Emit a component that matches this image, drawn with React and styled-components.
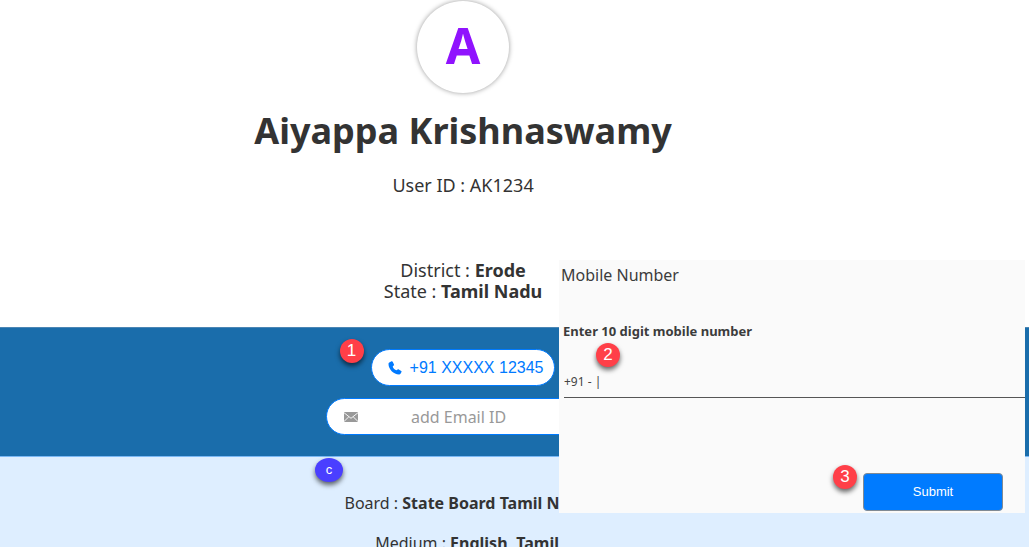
import React from "react";
import styled, { createGlobalStyle } from "styled-components";

const GlobalStyle = createGlobalStyle`
  * { box-sizing: border-box; }
  body {
    margin: 0;
    background: #fff;
    color: #333;
    font-family: "Noto Sans", "Open Sans", sans-serif;
  }
`;

const Page = styled.main`
  position: relative;
  display: flex;
  flex-direction: column;
  height: 100vh;
  overflow: hidden;
`;

const Column = styled.div`
  display: flex;
  flex-direction: column;
  align-items: center;
  width: 90%;
`;

const Header = styled.header`
  flex: none;
  padding: 1px 0 25px;
`;

const Avatar = styled.div`
  display: flex;
  align-items: center;
  justify-content: center;
  width: 92px;
  height: 92px;
  border-radius: 50%;
  background: #fff;
  box-shadow: 0 0 5px rgba(0, 0, 0, 0.4);
  color: #9013fe;
  font-size: 50px;
  font-weight: 700;
  line-height: 88px;
  padding-bottom: 4px;
`;

const Name = styled.h1`
  margin: 12px 0 18px;
  font-size: 36px;
  line-height: 52px;
  font-weight: 700;
`;

const Text = styled.p`
  margin: 0;
  font-size: ${(p) => (p.$small ? 16 : 18)}px;
  line-height: 21px;
  white-space: nowrap;
`;

const Location = styled.div`
  margin-top: 64px;
  text-align: center;
`;

const Contact = styled.section`
  flex: none;
  padding: 21px 0;
  border-top: 1px solid #4b86b4;
  border-bottom: 1px solid #7ab8f5;
  background: #1a6dab;
`;

const Contacts = styled(Column)`
  gap: 12px;
`;

const Anchor = styled.div`
  position: relative;
`;

const PhoneButton = styled.button`
  display: flex;
  align-items: center;
  gap: 8px;
  height: 37px;
  padding: 0 11px 0 16px;
  border: 1px solid #007aff;
  border-radius: 19px;
  background: #fff;
  color: #007aff;
  font: 16px/20px "Liberation Sans", Arial, sans-serif;
  white-space: nowrap;
`;

const EmailField = styled.label`
  display: flex;
  align-items: center;
  width: 274px;
  height: 37px;
  padding: 0 40px 0 17px;
  border: 1px solid #007aff;
  border-radius: 19px;
  background: #fff;
`;

const EmailInput = styled.input`
  flex: 1;
  min-width: 0;
  padding: 0;
  border: 0;
  outline: 0;
  background: transparent;
  font: 16px/22px "Noto Sans", sans-serif;
  text-align: center;
  &::placeholder { color: #999; opacity: 1; }
`;

const Details = styled.section`
  position: relative;
  flex: 1;
  padding-top: 36px;
  background: #deeeff;
`;

const DetailRows = styled(Column)`
  gap: 19px;
  padding-left: 8px;
`;

const Dialog = styled.form`
  position: absolute;
  top: 260px;
  right: 4px;
  display: flex;
  flex-direction: column;
  width: 466px;
  height: 253px;
  padding-bottom: 2px;
  background: #fafafa;
  color: #3c3c3c;
`;

const DialogTitle = styled.h2`
  margin: 3px 0 0 2px;
  font-size: 16px;
  line-height: 24px;
  font-weight: 400;
`;

const Label = styled.label`
  margin: 34px 0 0 4px;
  font-size: 13px;
  line-height: 20px;
  font-weight: 700;
`;

const NumberRow = styled.div`
  position: relative;
  margin: 30px 0 0 5px;
  border-bottom: 1px solid #555;
`;

const NumberInput = styled.input`
  display: block;
  width: 100%;
  height: 26px;
  padding: 0 0 6px;
  border: 0;
  outline: 0;
  background: transparent;
  color: #444;
  font: 12px/20px "Noto Sans", sans-serif;
`;

const SubmitRow = styled.div`
  position: relative;
  align-self: flex-end;
  margin: auto 22px 0 0;
`;

const SubmitButton = styled.button`
  width: 140px;
  height: 38px;
  border: 1px solid #808a94;
  border-radius: 4px;
  background: #007bff;
  color: #fff;
  font: 13px/20px "Liberation Sans", Arial, sans-serif;
`;

const Badge = styled.span`
  position: absolute;
  top: ${(p) => p.$top}px;
  left: ${(p) => p.$left};
  display: flex;
  align-items: center;
  justify-content: center;
  width: ${(p) => (p.$violet ? 28 : 24)}px;
  height: 24px;
  border-radius: 50%;
  background: ${(p) => (p.$violet ? "#4a3fff" : "#ff3f48")};
  box-shadow: 0 3px 5px rgba(0, 0, 0, 0.6);
  color: #fff;
  font-family: "Liberation Sans", Arial, sans-serif;
  font-size: ${(p) => (p.$violet ? 13 : 17)}px;
  line-height: 24px;
`;

const PhoneIcon = () => (
  <svg width="14" height="14" viewBox="0 0 14 14" aria-hidden="true">
    <path
      fill="#007aff"
      d="M1.300 1.500 3.500.300C4 .100 4.400.300 4.700.800L6 3.400C6.200 3.900 6.100 4.300 5.700 4.600L4.800 5.300C4.600 6.600 6.800 9 8.700 9.300L9.600 8.500C10 8.200 10.400 8.200 10.800 8.400L13.200 9.900C13.700 10.200 13.800 10.600 13.500 11.100L12.500 12.700C12.200 13.200 11.700 13.400 11.100 13.400 5.500 13.400.500 8.300.500 3 .500 2.300.700 1.800 1.300 1.500Z"
    />
  </svg>
);

const MailIcon = () => (
  <svg width="14" height="10" viewBox="0 0 14 10" aria-hidden="true">
    <rect width="14" height="10" fill="#999" />
    <path
      d="M0 .7 7 6.300 14 .7M0 9.500 4.900 4.700M14 9.500 9.100 4.700"
      fill="none"
      stroke="#fff"
      strokeWidth=".9"
    />
  </svg>
);

export default function App() {
  return (
    <Page>
      <GlobalStyle />
      <Header>
        <Column>
          <Avatar>A</Avatar>
          <Name>Aiyappa Krishnaswamy</Name>
          <Text>User ID : AK1234</Text>
          <Location>
            <Text>District : <b>Erode</b></Text>
            <Text>State : <b>Tamil Nadu</b></Text>
          </Location>
        </Column>
      </Header>

      <Contact>
        <Contacts>
          <Anchor>
            <PhoneButton type="button">
              <PhoneIcon />
              +91 XXXXX 12345
            </PhoneButton>
            <Badge $top={-10} $left="-31px">1</Badge>
          </Anchor>
          <EmailField>
            <MailIcon />
            <EmailInput type="email" placeholder="add Email ID" aria-label="Email ID" />
          </EmailField>
        </Contacts>
      </Contact>

      <Details>
        <DetailRows>
          <Text $small>Board : <b>State Board Tamil Nadu</b></Text>
          <Text $small>Medium : <b>English, Tamil</b></Text>
        </DetailRows>
        <Badge $violet $top={1} $left="calc(45% - 148px)">c</Badge>
      </Details>

      <Dialog onSubmit={(e) => e.preventDefault()}>
        <DialogTitle>Mobile Number</DialogTitle>
        <Label htmlFor="mobile">Enter 10 digit mobile number</Label>
        <NumberRow>
          <NumberInput id="mobile" type="tel" defaultValue="+91 - |" />
          <Badge $top={-28} $left="32px">2</Badge>
        </NumberRow>
        <SubmitRow>
          <SubmitButton type="submit">Submit</SubmitButton>
          <Badge $top={-8} $left="-30px">3</Badge>
        </SubmitRow>
      </Dialog>
    </Page>
  );
}
